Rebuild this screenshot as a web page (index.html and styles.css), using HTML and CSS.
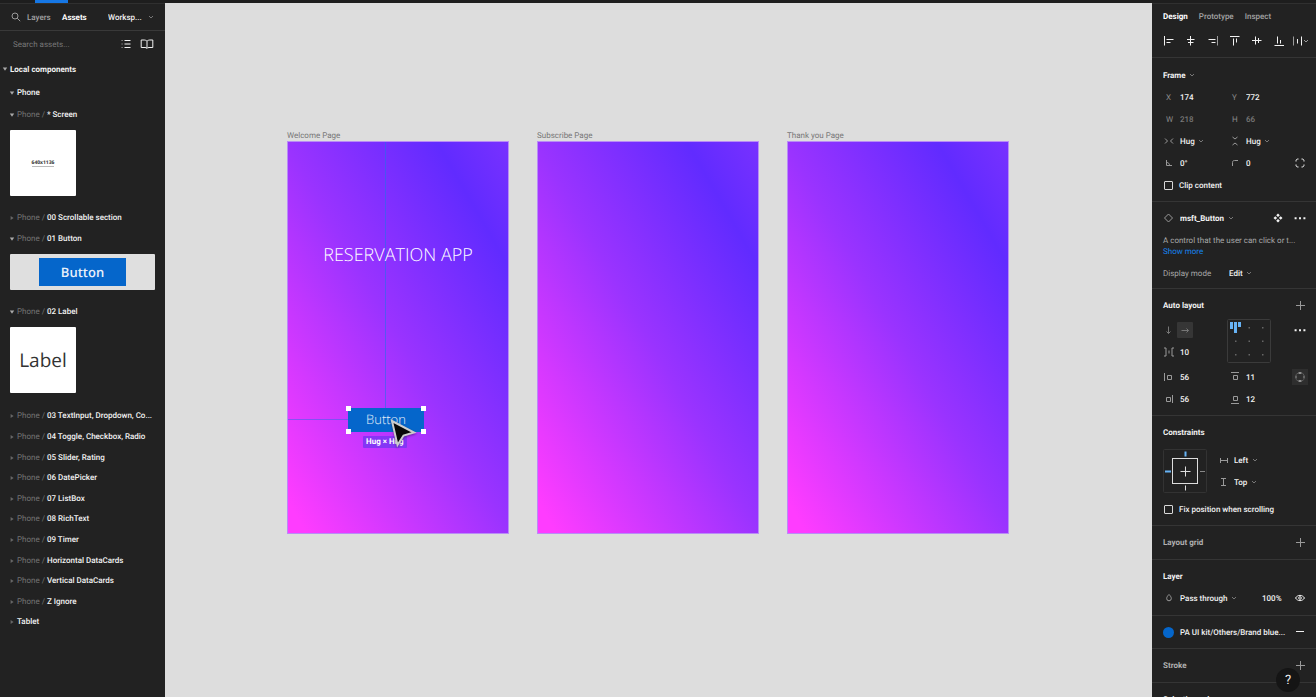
FILE: index.html
```html
<!DOCTYPE html>
<html lang="en">
<head>
<meta charset="utf-8">
<title>Reservation app – design editor</title>
<link rel="stylesheet" href="styles.css">
</head>
<body>
<svg class="sprite" aria-hidden="true">
  <symbol id="chev" viewBox="0 0 6 6"><path d="M1 2l2 2 2-2"/></symbol>
  <symbol id="plus" viewBox="0 0 12 12"><path d="M6.500 2v9M2 6.500h9"/></symbol>
  <symbol id="dots" viewBox="0 0 12 12"><path class="fill" d="M.6 5.200h2v2H.6zM5 5.200h2v2H5zM9.400 5.200h2v2H9.400z"/></symbol>
  <symbol id="open" viewBox="0 0 6 6"><path class="fill" d="M.8 1.600h4.400L3 4.800z"/></symbol>
  <symbol id="closed" viewBox="0 0 6 6"><path class="fill" d="M1.600 1L4.600 3 1.600 5z"/></symbol>
</svg>

<header class="topbar"><span class="topbar-tab"></span></header>

<div class="workspace">
  <aside class="panel assets">
    <div class="assets-head">
      <svg class="ico dim" viewBox="0 0 12 12"><circle cx="5" cy="5" r="3"/><path d="M7.2 7.2l3 3"/></svg>
      <button class="tab">Layers</button>
      <button class="tab active">Assets</button>
      <span class="drop page-pick"><select aria-label="Page"><option>Worksp...</option></select><svg class="chev"><use href="#chev"/></svg></span>
    </div>
    <div class="search">
      <input type="text" placeholder="Search assets..." aria-label="Search assets">
      <button aria-label="List view"><svg class="ico" viewBox="0 0 12 12"><path d="M4.500 2.500h6M4.500 6h6M4.500 9.500h6"/><path class="dim" d="M1.500 2.500h1.200M1.500 6h1.200M1.500 9.500h1.200"/></svg></button>
      <button aria-label="Libraries"><svg class="ico book" viewBox="0 0 14 12"><path d="M7 3.200C6 2.200 5 2 4 2H1.200v7.500H5c1 0 1.600.3 2 1 .4-.7 1-1 2-1h3.800V2H10C9 2 8 2.200 7 3.200zv7"/></svg></button>
    </div>
    <button class="group root"><svg class="tri"><use href="#open"/></svg>Local components</button>
    <button class="group kit"><svg class="tri"><use href="#open"/></svg>Phone</button>

    <button class="row"><svg class="tri"><use href="#open"/></svg><i>Phone /</i>* Screen</button>
    <div class="thumbs"><div class="thumb square"><span class="size-note">640x1136</span></div></div>
    <button class="row"><svg class="tri shut"><use href="#closed"/></svg><i>Phone /</i>00 Scrollable section</button>
    <button class="row"><svg class="tri"><use href="#open"/></svg><i>Phone /</i>01 Button</button>
    <div class="thumbs"><div class="thumb wide"><span class="sample-button">Button</span></div></div>
    <button class="row"><svg class="tri"><use href="#open"/></svg><i>Phone /</i>02 Label</button>
    <div class="thumbs"><div class="thumb square"><span class="sample-label">Label</span></div></div>
    <div class="rows">
      <button class="row"><svg class="tri shut"><use href="#closed"/></svg><i>Phone /</i>03 TextInput, Dropdown, Co...</button>
      <button class="row"><svg class="tri shut"><use href="#closed"/></svg><i>Phone /</i>04 Toggle, Checkbox, Radio</button>
      <button class="row"><svg class="tri shut"><use href="#closed"/></svg><i>Phone /</i>05 Slider, Rating</button>
      <button class="row"><svg class="tri shut"><use href="#closed"/></svg><i>Phone /</i>06 DatePicker</button>
      <button class="row"><svg class="tri shut"><use href="#closed"/></svg><i>Phone /</i>07 ListBox</button>
      <button class="row"><svg class="tri shut"><use href="#closed"/></svg><i>Phone /</i>08 RichText</button>
      <button class="row"><svg class="tri shut"><use href="#closed"/></svg><i>Phone /</i>09 Timer</button>
      <button class="row"><svg class="tri shut"><use href="#closed"/></svg><i>Phone /</i>Horizontal DataCards</button>
      <button class="row"><svg class="tri shut"><use href="#closed"/></svg><i>Phone /</i>Vertical DataCards</button>
      <button class="row"><svg class="tri shut"><use href="#closed"/></svg><i>Phone /</i>Z Ignore</button>
      <button class="row"><svg class="tri shut"><use href="#closed"/></svg>Tablet</button>
    </div>
  </aside>

  <main class="canvas">
    <section class="artboard">
      <h2>Welcome Page</h2>
      <div class="screen">
        <span class="guide-v"></span><span class="guide-h"></span>
        <p class="app-title">RESERVATION APP</p>
        <div class="selected">Button<b class="tl"></b><b class="tr"></b><b class="bl"></b><b class="br"></b></div>
        <span class="size-tag">Hug × Hug</span>
        <svg class="cursor" viewBox="0 0 30 32"><path d="M3 3l22 11.500-10.500 3L8.500 27z"/></svg>
      </div>
    </section>
    <section class="artboard"><h2>Subscribe Page</h2><div class="screen"></div></section>
    <section class="artboard"><h2>Thank you Page</h2><div class="screen"></div></section>
  </main>

  <aside class="panel props">
    <div class="section head">
      <nav class="tabs"><button class="tab active">Design</button><button class="tab">Prototype</button><button class="tab">Inspect</button></nav>
      <div class="aligns">
        <button aria-label="Align left"><svg class="ico" viewBox="0 0 12 12"><path d="M1.500 1v9.500M3.500 4.500h7M3.500 7.500h4"/></svg></button>
        <button aria-label="Align horizontal centers"><svg class="ico" viewBox="0 0 12 12"><path d="M5.500 1v9.500M2 4.500h7.500M3 7.500h5.500"/></svg></button>
        <button aria-label="Align right"><svg class="ico" viewBox="0 0 12 12"><path d="M1.500 4.500h7M4.500 7.500h4"/><path class="dim" d="M10.500 1v9.500"/></svg></button>
        <button aria-label="Align top"><svg class="ico" viewBox="0 0 12 12"><path d="M1 1.500h9.500M4.500 3.500v7M7.500 3.500v4"/></svg></button>
        <button aria-label="Align vertical centers"><svg class="ico" viewBox="0 0 12 12"><path d="M1 5.500h9.500M4.500 1.500v8M7.500 3v5"/></svg></button>
        <button aria-label="Align bottom"><svg class="ico" viewBox="0 0 12 12"><path d="M1.500 10.500H11M4.500 1.500v7M7.500 5v3.500"/></svg></button>
        <button aria-label="Distribute"><svg class="ico spread" viewBox="0 0 18 12"><path class="dim" d="M1.500 1.500v9"/><path d="M5.500 4v4.500M9.500 1.500v9"/><path class="dim" d="M12 5l2 2 2-2"/></svg></button>
      </div>
    </div>

    <div class="section frame">
      <div class="title"><span class="drop"><select aria-label="Frame type"><option>Frame</option></select><svg class="chev"><use href="#chev"/></svg></span></div>
      <div class="fields">
        <label for="x">X</label><input id="x" type="text" value="174"><label for="y">Y</label><input id="y" type="text" value="772"><span></span>
        <label for="w">W</label><input id="w" class="off" type="text" value="218"><label for="h">H</label><input id="h" class="off" type="text" value="66"><span></span>
        <svg class="ico dim" viewBox="0 0 12 12"><path d="M2 3.500L4.500 6 2 8.500M10 3.500L7.500 6 10 8.500"/></svg><span class="drop"><select aria-label="Horizontal resizing"><option>Hug</option></select><svg class="chev"><use href="#chev"/></svg></span>
        <svg class="ico dim" viewBox="0 0 12 12"><path d="M3.500 2L6 4l2.500-2M3.500 10L6 8l2.500 2"/></svg><span class="drop"><select aria-label="Vertical resizing"><option>Hug</option></select><svg class="chev"><use href="#chev"/></svg></span><span></span>
        <svg class="ico dim" viewBox="0 0 12 12"><path d="M3.500 3v5.500H9M3.500 5.500c2 0 3 1 3 3"/></svg><input type="text" value="0°" aria-label="Rotation">
        <svg class="ico dim" viewBox="0 0 12 12"><path d="M3.500 9V5.500c0-1.300.7-2 2-2H9"/></svg><input type="text" value="0" aria-label="Corner radius">
        <button aria-label="Independent corners"><svg class="ico" viewBox="0 0 12 12"><path d="M2 4.500V4c0-1.300.7-2 2-2h.5M7.500 2H8c1.300 0 2 .7 2 2v.5M10 7.500V8c0 1.300-.7 2-2 2h-.5M4.500 10H4c-1.300 0-2-.7-2-2v-.5"/></svg></button>
      </div>
      <label class="check"><input type="checkbox">Clip content</label>
    </div>

    <div class="section instance">
      <div class="title">
        <svg class="ico dim lead" viewBox="0 0 12 12"><path d="M5.500 2L9.500 6l-4 4-4-4z"/></svg>
        <span class="drop"><select aria-label="Component"><option>msft_Button</option></select><svg class="chev"><use href="#chev"/></svg></span>
        <button class="push" aria-label="Go to main component"><svg class="ico" viewBox="0 0 12 12"><path class="fill" d="M6 1.500l1.800 1.800L6 5.100 4.200 3.300zM6 6.900l1.800 1.800L6 10.500 4.200 8.700zM3.300 4.200L5.100 6 3.300 7.800 1.500 6zM8.700 4.200L10.500 6 8.700 7.800 6.900 6z"/></svg></button>
        <button aria-label="More"><svg class="ico"><use href="#dots"/></svg></button>
      </div>
      <p class="about">A control that the user can click or t...<br><a href="#more">Show more</a></p>
      <div class="mode"><label for="mode">Display mode</label><span class="drop"><select id="mode"><option>Edit</option></select><svg class="chev"><use href="#chev"/></svg></span></div>
    </div>

    <div class="section auto">
      <div class="title">Auto layout<button class="push" aria-label="Add auto layout"><svg class="ico dim"><use href="#plus"/></svg></button></div>
      <div class="auto-top">
        <div class="auto-left">
          <div class="dirs"><button aria-label="Vertical"><svg class="ico faint" viewBox="0 0 12 12"><path d="M5.500 2.500v7M3.500 7.500l2 2 2-2"/></svg></button><button class="on" aria-label="Horizontal"><svg class="ico faint" viewBox="0 0 12 12"><path d="M2.500 6.500h7M7.500 4.500l2 2-2 2"/></svg></button></div>
          <div class="spacing"><svg class="ico dim" viewBox="0 0 12 12"><path d="M1 2h2v8H1M11 2H9v8h2M6 4.500v3"/></svg><input type="text" value="10" aria-label="Spacing"></div>
        </div>
        <svg class="align-grid" viewBox="0 0 44 44" role="img" aria-label="Alignment"><rect x=".5" y=".5" width="43" height="43" rx="1"/><path class="bars" d="M3 3h3v7H3zM7 3h3v11H7zM11 3h3v5h-3z"/><path class="pips" d="M21.500 8h1.500v1.500h-1.500zM35 8h1.500v1.500H35zM8 21.500h1.500v1.500H8zM21.500 21.500h1.500v1.500h-1.500zM35 21.500h1.500v1.500H35zM8 35h1.500v1.500H8zM21.500 35h1.500v1.500h-1.500zM35 35h1.500v1.500H35z"/></svg>
        <button class="push more" aria-label="Advanced layout"><svg class="ico"><use href="#dots"/></svg></button>
      </div>
      <div class="fields">
        <svg class="ico dim" viewBox="0 0 12 12"><path d="M1.500 2v8M4.500 4.500h4v4h-4z"/></svg><input type="text" value="56" aria-label="Left padding">
        <svg class="ico dim" viewBox="0 0 12 12"><path d="M2 1.500h8M4.500 4.500h4v4h-4z"/></svg><input type="text" value="11" aria-label="Top padding">
        <button class="sides" aria-label="Independent padding"><svg class="ico" viewBox="0 0 12 12"><path d="M4.500 2h3M4.500 10h3"/><path class="dim" d="M2 4.500v3M10 4.500v3M2.500 3.300l.8-.8M8.700 2.500l.8.800M9.500 8.700l-.8.800M3.300 9.500l-.8-.8"/></svg></button>
        <svg class="ico dim" viewBox="0 0 12 12"><path d="M9.500 2v8M3.500 4.500h4v4h-4z"/></svg><input type="text" value="56" aria-label="Right padding">
        <svg class="ico dim" viewBox="0 0 12 12"><path d="M2 10.500h8M4.500 3.500h4v4h-4z"/></svg><input type="text" value="12" aria-label="Bottom padding"><span></span>
      </div>
    </div>

    <div class="section constraints">
      <div class="title">Constraints</div>
      <div class="pin">
        <svg class="pin-box" viewBox="0 0 44 44" role="img" aria-label="Pinned left and top"><rect class="edge" x=".5" y=".5" width="43" height="43" rx="1"/><rect class="inner" x="9.500" y="9.500" width="25" height="25"/><path class="inner" d="M22.500 17.500v10M17.500 22.500h10"/><path class="inner" d="M22.500 36.500v5"/><path class="soft" d="M37 22.500h5"/><path class="set" d="M22.500 2.500v5M2 22.500h6"/></svg>
        <div class="pin-sides">
          <svg class="ico dim" viewBox="0 0 12 12"><path d="M2.500 4v5M9.500 4v5M2.500 6.500h7"/></svg><span class="drop"><select aria-label="Horizontal constraint"><option>Left</option></select><svg class="chev"><use href="#chev"/></svg></span>
          <svg class="ico dim" viewBox="0 0 12 12"><path d="M3 2.500h5M3 9.500h5M5.500 2.500v7"/></svg><span class="drop"><select aria-label="Vertical constraint"><option>Top</option></select><svg class="chev"><use href="#chev"/></svg></span>
        </div>
      </div>
      <label class="check"><input type="checkbox">Fix position when scrolling</label>
    </div>

    <div class="section"><div class="title quiet">Layout grid<button class="push" aria-label="Add layout grid"><svg class="ico dim"><use href="#plus"/></svg></button></div></div>

    <div class="section">
      <div class="title">Layer</div>
      <div class="line">
        <svg class="ico dim lead" viewBox="0 0 12 12"><path d="M6 2.500c1.500 1.500 2.300 2.700 2.300 4a2.300 2.300 0 0 1-4.600 0c0-1.300.8-2.500 2.300-4z"/></svg>
        <span class="drop"><select aria-label="Blend mode"><option>Pass through</option></select><svg class="chev"><use href="#chev"/></svg></span>
        <input class="opacity push" type="text" value="100%" aria-label="Opacity">
        <button aria-label="Toggle visibility"><svg class="ico" viewBox="0 0 12 12"><path d="M1.500 6C3.700 2.500 8.300 2.500 10.500 6 8.300 9.500 3.700 9.500 1.500 6z"/><circle cx="6" cy="6" r="1.300"/></svg></button>
      </div>
    </div>

    <div class="section fill-style"><div class="line"><span class="swatch"></span>PA UI kit/Others/Brand blue...<button class="push" aria-label="Remove fill"><svg class="ico" viewBox="0 0 12 12"><path d="M2 5.500h8"/></svg></button></div></div>
    <div class="section"><div class="title quiet">Stroke<button class="push" aria-label="Add stroke"><svg class="ico dim"><use href="#plus"/></svg></button></div></div>
    <div class="section"><div class="title">Selection colors</div></div>
  </aside>
</div>
<button class="help" aria-label="Help">?</button>
</body>
</html>
```
FILE: styles.css
```css
* { box-sizing: border-box; }

body {
  margin: 0;
  height: 100vh;
  overflow: hidden;
  display: flex;
  flex-direction: column;
  background: #222;
  color: #f2f2f2;
  font: 500 8px/11px Roboto, "Liberation Sans", sans-serif;
  text-rendering: geometricPrecision;
}

button, input, select {
  appearance: none;
  margin: 0;
  padding: 0;
  border: 0;
  border-radius: 0;
  background: none;
  color: inherit;
  font: inherit;
  text-align: left;
  text-rendering: inherit;
}

button, .drop, .title, .line, .mode, .check { display: flex; align-items: center; }
h2, p { margin: 0; font-weight: 400; }

.sprite { position: absolute; width: 0; height: 0; }
svg { flex: none; fill: none; stroke: currentColor; }
.fill { fill: currentColor; stroke: none; }
.ico { width: 12px; height: 12px; }
.dim { color: #9a9a9a; stroke: #9a9a9a; }
.faint { color: #777; }
.chev { width: 6px; height: 6px; color: #777; }
.drop { gap: 3px; }
.push { margin-left: auto; }

.topbar { flex: none; height: 3px; padding-left: 35px; background: #1e1e1e; }
.topbar-tab { display: block; width: 33px; height: 3px; background: #1677e5; }

.workspace { flex: 1; min-height: 0; display: flex; }
.panel { flex: none; overflow: hidden; background: #222; border-top: 1px solid #303030; }

/* Assets panel */
.assets { width: 165px; }
.assets-head { display: flex; align-items: center; height: 27px; padding-left: 10px; border-bottom: 1px solid #393939; }
.tab { color: #a2a2a2; }
.tab.active { color: #fff; font-weight: 700; }
.assets-head .tab { width: 35px; }
.assets-head .ico { margin-right: 5px; }
.page-pick { flex: 1; justify-content: space-between; margin-left: 11px; padding-right: 11px; }

.search { display: flex; align-items: center; gap: 8px; height: 26px; padding: 0 11px 0 13px; }
.search input { flex: 1; min-width: 0; font-weight: 400; }
.search input::placeholder { color: #777; opacity: 1; }
.search .book { width: 14px; }

.group, .row { width: 100%; height: 24px; padding-left: 9px; white-space: pre; }
.group.root { padding-left: 2px; font-weight: 700; }
.group.kit { height: 23px; }
.row { height: 21px; }
.row i { margin-right: 2px; color: #747474; font-style: normal; font-weight: 400; }
.tri { width: 6px; height: 6px; margin-right: 2px; color: #aaa; }
.tri.shut { color: #666; }
.rows { display: grid; grid-auto-rows: 21px 21px 20px 21px 20px; padding-top: 1px; }

.thumbs { padding: 5px 10px 11px; }
.thumb { display: flex; align-items: center; justify-content: center; border-radius: 1px; }
.square { width: 66px; height: 66px; background: #fff; color: #333; }
.wide { height: 36px; background: #dfdfdf; }
.size-note { border-bottom: 1px solid #bbb; font: 700 5px/6px "Open Sans", sans-serif; }
.sample-button { width: 87px; background: #0566cb; color: #e8f0fa; font: 600 13px/28px "Open Sans", sans-serif; text-align: center; }
.sample-label { font: 400 19px/28px "Open Sans", sans-serif; }

/* Canvas */
.canvas { flex: 1; min-width: 0; overflow: hidden; display: flex; align-items: flex-start; gap: 28px; padding: 128px 0 0 122px; background: #ddd; }
.artboard { flex: none; width: 222px; }
.artboard h2 { color: #777; font-size: 8px; line-height: 10px; }
.screen { position: relative; height: 393px; border: 1px solid #b98cf6; background: linear-gradient(60deg, #ff3cff 4%, #9a33ff 50%, #612bff 84%, #7831ff); }
.guide-v, .guide-h { position: absolute; }
.guide-v { left: 97px; top: 0; height: 266px; border-left: 1px solid rgba(40, 110, 235, .6); }
.guide-h { left: 0; top: 277px; width: 60px; border-top: 1px solid rgba(70, 100, 235, .6); }
.app-title { position: absolute; left: 0; right: 0; top: 100px; color: #fff; font: 300 18px/26px "Open Sans", sans-serif; text-align: center; }
.selected { position: absolute; left: 60px; top: 266px; width: 76px; height: 24px; background: #0566cb; color: #e8f0fa; font: 300 13px/22px "Open Sans", sans-serif; text-align: center; }
.selected b { position: absolute; width: 5px; height: 5px; background: #fff; }
.tl, .tr { top: -2px; }
.bl, .br { bottom: -2px; }
.tl, .bl { left: -2px; }
.tr, .br { right: -2px; }
.size-tag { position: absolute; left: 75px; top: 294px; padding: 0 3px; border-radius: 1px; background: #8436f5; color: #fff; font-weight: 700; line-height: 12px; }
.cursor { position: absolute; left: 101px; top: 276px; width: 30px; height: 32px; fill: #080808; stroke: #ccc; stroke-width: 2; filter: drop-shadow(0 1px 1px rgba(0, 0, 0, .4)); }

/* Properties panel */
.props { width: 164px; }
.section { padding: 5px 10px 6px 11px; border-bottom: 1px solid #353535; }
.section.head { padding: 0 0 4px; }
.section.frame { padding-top: 6px; padding-bottom: 5px; }
.section.instance { padding-bottom: 4px; }
.section.auto, .section.constraints, .section.fill-style { padding-bottom: 5px; }

.tabs { display: flex; gap: 11px; height: 25px; padding-left: 11px; }
.aligns { display: flex; height: 24px; padding-left: 6px; }
.aligns button { width: 22px; justify-content: center; }
.aligns .spread { width: 18px; }

.title, .line, .mode { height: 22px; }
.title { font-weight: 700; }
.title.quiet { color: #b0b0b0; }
.title .push + button { margin-left: 10px; }
.lead { margin-right: 5px; }

.fields { display: grid; grid-template-columns: 17px 49px 17px 1fr 12px; grid-auto-rows: 22px; align-items: center; }
.fields label { padding-left: 3px; color: #8a8a8a; font-weight: 400; }
.fields input { width: 40px; }
.fields .off { color: #777; }

.check { height: 22px; gap: 6px; }
.check input { width: 9px; height: 9px; margin-left: 1px; border: 1px solid #d8d8d8; border-radius: 1px; }

.about { padding: 6px 0 5px; color: #a8a8a8; font-weight: 400; white-space: nowrap; }
.about a { color: #1683ee; text-decoration: none; }
.mode label { width: 66px; color: #a8a8a8; font-weight: 400; }

.auto-top { display: flex; padding: 3px 0; }
.auto-left { width: 64px; }
.dirs, .spacing { display: flex; align-items: center; height: 22px; }
.dirs button { height: 16px; padding: 0 2px; }
.dirs button:first-child { padding: 0 2px 0 0; }
.dirs .on { background: #363636; border-radius: 1px; }
.spacing .ico { margin-right: 5px; }
.spacing input { width: 30px; }
.align-grid { width: 44px; height: 44px; stroke: #3b3b3b; }
.align-grid .bars { fill: #67b3f5; stroke: none; }
.align-grid .pips { fill: #666; stroke: none; }
.more { height: 22px; }
.sides { width: 16px; height: 16px; justify-self: center; justify-content: center; background: #2e2e2e; }

.pin { display: flex; gap: 11px; padding: 6px 0 5px; }
.pin-box { width: 44px; height: 44px; }
.edge { stroke: #333; }
.inner { stroke: #ddd; }
.soft { stroke: #888; }
.set { stroke: #67b3f5; stroke-width: 2; }
.pin-sides { display: grid; grid-template-columns: 16px auto; grid-auto-rows: 22px; align-items: center; }

.opacity { width: 24px; margin-right: 8px; }
.swatch { width: 11px; height: 11px; margin-right: 6px; border-radius: 50%; background: #0566cb; }

.help { position: fixed; right: 16px; bottom: 5px; width: 24px; height: 24px; justify-content: center; border-radius: 50%; background: #151515; font-size: 13px; font-weight: 400; }
```
